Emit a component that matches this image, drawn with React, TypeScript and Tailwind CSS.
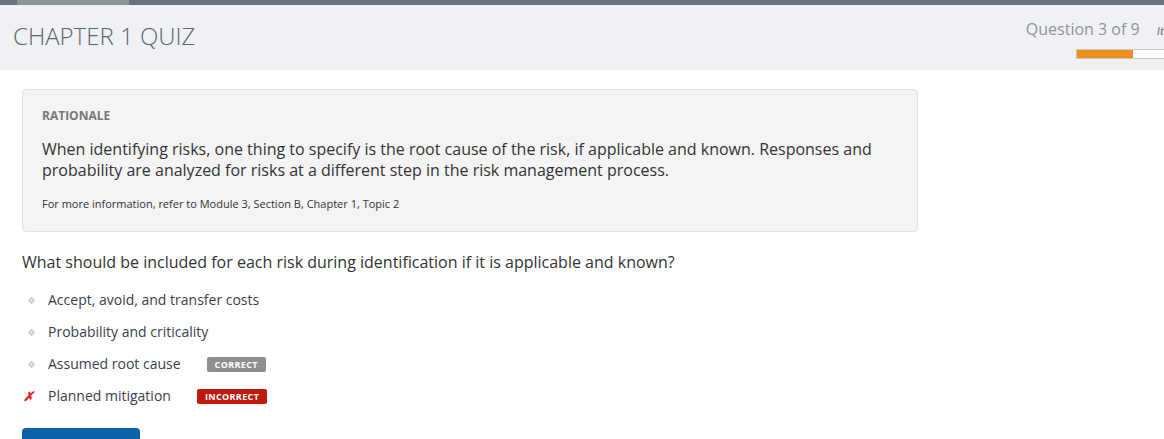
export default function App() {
  const options = [
    { text: 'Accept, avoid, and transfer costs', mark: 'dot' },
    { text: 'Probability and criticality', mark: 'dot' },
    { text: 'Assumed root cause', mark: 'dot', badge: 'CORRECT' },
    { text: 'Planned mitigation', mark: 'x', badge: 'INCORRECT' },
  ];

  return (
    <div className="h-[439px] w-[1164px] overflow-hidden bg-white font-['Open_Sans',sans-serif] text-[#333]">
      {/* top strip */}
      <div className="flex h-[5px] bg-[#6a737c]">
        <div className="ml-[17px] w-[112px] bg-[#8c9399]" />
      </div>

      {/* header */}
      <div className="flex h-[65px] items-start justify-between bg-[#f0f1f4]">
        <h1 className="ml-[13px] mt-[15px] text-[24px] font-light leading-[32px] text-[#5c6670]">CHAPTER 1 QUIZ</h1>
        <div className="mt-[13px] flex flex-col items-end">
          <div className="flex items-baseline whitespace-nowrap">
            <span className="text-[16px] leading-[22px] text-[#8e959b]">Question 3 of 9</span>
            <span className="ml-[17px] text-[10px] font-bold italic text-[#8e959b]">It</span>
          </div>
          <div className="mt-[9px] flex h-[10px] w-[88px] border border-r-0 border-[#c8c8c8] bg-white">
            <div className="w-[56px] bg-[#f0901e]" />
          </div>
        </div>
      </div>

      <div className="px-[22px] pt-[19px]">
        {/* rationale */}
        <div className="w-[896px] rounded-[4px] border border-[#e2e2e2] bg-[#f4f4f4] px-[19px] pb-[19px] pt-[17px]">
          <div className="text-[12px] font-bold leading-[18px] text-[#777]">RATIONALE</div>
          <p className="mt-[14px] text-[16px] leading-[21px] text-[#333]">
            When identifying risks, one thing to specify is the root cause of the risk, if applicable and known. Responses and probability are analyzed for risks at a different step in the risk management process.
          </p>
          <p className="mt-[15px] text-[11px] leading-[16px] text-[#333]">
            For more information, refer to Module 3, Section B, Chapter 1, Topic 2
          </p>
        </div>

        {/* question */}
        <p className="mt-[19px] text-[16px] leading-[22px] text-[#333]">
          What should be included for each risk during identification if it is applicable and known?
        </p>

        <ul className="mt-[11px] flex flex-col">
          {options.map((o) => (
            <li key={o.text} className="flex h-[32px] items-center">
              <span className="flex w-[26px] items-center justify-start">
                {o.mark === 'x' ? (
                  <span className="ml-[1px] text-[13px] font-bold italic leading-none text-[#e0201a]">✗</span>
                ) : (
                  <span className="ml-[7px] block h-[5px] w-[5px] rotate-45 border border-[#c4c4c4] bg-[#e4e4e4]" />
                )}
              </span>
              <span className="text-[14px] leading-[20px] text-[#3a3f4a]">{o.text}</span>
              {o.badge && (
                <span
                  className={
                    o.badge === 'CORRECT'
                      ? 'ml-[26px] rounded-[2px] bg-[#8f8f8f] px-[8px] text-[9px] font-bold leading-[15px] tracking-[0.04em] text-white'
                      : 'ml-[26px] rounded-[2px] bg-[#c0180c] px-[8px] text-[9px] font-bold leading-[15px] tracking-[0.04em] text-white'
                  }
                >
                  {o.badge}
                </span>
              )}
            </li>
          ))}
        </ul>

        <button className="mt-[16px] h-[30px] w-[118px] rounded-[4px] bg-[#0d63a8]" />
      </div>
    </div>
  );
}
